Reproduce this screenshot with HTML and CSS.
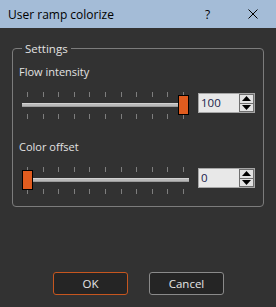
FILE: index.html
```html
<!DOCTYPE html>
<html>
<head>
<meta charset="utf-8">
<link rel="stylesheet" href="styles.css">
</head>
<body>
<div class="dialog">
  <div class="titlebar">
    <span class="title">User ramp colorize</span>
    <span class="help">?</span>
    <span class="close"><svg width="10" height="10" viewBox="0 0 10 10"><path d="M0.5 0.5 L9.5 9.5 M9.5 0.5 L0.5 9.5" stroke="#000" stroke-width="1" fill="none"/></svg></span>
  </div>
  <div class="content">
    <fieldset class="group">
      <legend class="legend">Settings</legend>
      <div class="label">Flow intensity</div>
      <div class="row">
        <div class="slider">
          <div class="ticks ticks-top"><i></i><i></i><i></i><i></i><i></i><i></i><i></i><i></i><i></i><i></i><i></i></div>
          <div class="groove"></div>
          <div class="ticks ticks-bottom"><i></i><i></i><i></i><i></i><i></i><i></i><i></i><i></i><i></i><i></i><i></i></div>
          <div class="handle" style="left:156px"></div>
        </div>
        <div class="spin">
          <span class="val">100</span>
          <div class="arrows">
            <div class="arr"><svg width="9" height="5" viewBox="0 0 9 5"><path d="M0 5 L4.5 0 L9 5 Z" fill="#000"/></svg></div>
            <div class="arr"><svg width="9" height="5" viewBox="0 0 9 5"><path d="M0 0 L4.5 5 L9 0 Z" fill="#000"/></svg></div>
          </div>
        </div>
      </div>
      <div class="label label2">Color offset</div>
      <div class="row">
        <div class="slider">
          <div class="ticks ticks-top"><i></i><i></i><i></i><i></i><i></i><i></i><i></i><i></i><i></i><i></i><i></i></div>
          <div class="groove"></div>
          <div class="ticks ticks-bottom"><i></i><i></i><i></i><i></i><i></i><i></i><i></i><i></i><i></i><i></i><i></i></div>
          <div class="handle" style="left:0px"></div>
        </div>
        <div class="spin">
          <span class="val">0</span>
          <div class="arrows">
            <div class="arr"><svg width="9" height="5" viewBox="0 0 9 5"><path d="M0 5 L4.5 0 L9 5 Z" fill="#000"/></svg></div>
            <div class="arr"><svg width="9" height="5" viewBox="0 0 9 5"><path d="M0 0 L4.5 5 L9 0 Z" fill="#000"/></svg></div>
          </div>
        </div>
      </div>
    </fieldset>
    <div class="buttons">
      <button class="btn btn-ok">OK</button>
      <button class="btn">Cancel</button>
    </div>
  </div>
</div>
</body>
</html>
```
FILE: styles.css
```css
* { box-sizing: border-box; }
html, body {
  margin: 0;
  padding: 0;
  background: #323232;
}
body {
  width: 276px;
  height: 307px;
  overflow: hidden;
  font-family: "Open Sans", "Noto Sans", sans-serif;
  font-size: 11px;
  color: #e2e2e2;
}
.dialog {
  width: 276px;
  height: 307px;
  display: flex;
  flex-direction: column;
}
.titlebar {
  height: 28px;
  background: #a4bcd7;
  display: flex;
  align-items: center;
  padding-left: 8px;
  color: #000;
  font-size: 12px;
}
.title {
  flex: 1;
}
.help {
  width: 8px;
  margin-right: 35px;
  font-size: 12px;
}
.close {
  width: 10px;
  height: 10px;
  margin-right: 18px;
  display: flex;
}
.content {
  flex: 1;
  padding-top: 12px;
}
.group {
  margin: 0 12px;
  border: 1px solid #7c7c7c;
  border-radius: 4px;
  padding: 7px 8px 12px 6px;
  min-width: 0;
}
.legend {
  margin-left: 3px;
  padding: 0 3px;
  line-height: 17px;
  font-size: 11.5px;
}
.label {
  line-height: 16px;
  height: 16px;
  margin-bottom: 12px;
}
.label2 {
  margin-top: 20px;
}
.row {
  display: flex;
  align-items: flex-start;
}
.slider {
  position: relative;
  margin-left: 3px;
  width: 167px;
  height: 27px;
  display: flex;
  flex-direction: column;
}
.ticks {
  display: flex;
  justify-content: space-between;
  padding: 0 5px;
  height: 5px;
}
.ticks i {
  width: 1px;
  height: 5px;
  background: #7e7e7e;
}
.groove {
  margin-top: 6px;
  height: 4px;
  background: #b9b9b9;
  border-top: 1px solid #d2d2d2;
  border-bottom: 1px solid #9c9c9c;
}
.ticks-bottom {
  margin-top: 7px;
}
.handle {
  position: absolute;
  top: 3px;
  width: 11px;
  height: 20px;
  background: #e05c1f;
  border: 1px solid #000;
}
.spin {
  margin-left: 9px;
  margin-top: 1px;
  width: 57px;
  height: 20px;
  display: flex;
  background: #e8e8e8;
  border: 1px solid #a6a6a6;
}
.val {
  flex: 1;
  padding-left: 2px;
  line-height: 18px;
  color: #18224a;
  font-size: 11.5px;
}
.arrows {
  width: 15px;
  display: flex;
  flex-direction: column;
  gap: 0;
}
.arr {
  flex: 1;
  display: flex;
  align-items: center;
  justify-content: center;
  border: 1px solid #6e6e6e;
  background: #e2e2e2;
}
.arr + .arr {
  border-top: none;
}
.buttons {
  display: flex;
  gap: 21px;
  padding-left: 53px;
  margin-top: 65px;
}
.btn {
  width: 75px;
  height: 23px;
  background: #252525;
  border: 1px solid #8a8a8a;
  border-radius: 3px;
  color: #e6e6e6;
  font-family: "Open Sans", "Noto Sans", sans-serif;
  font-size: 11.5px;
  padding: 0;
}
.btn-ok {
  border-color: #c6561f;
}
```
